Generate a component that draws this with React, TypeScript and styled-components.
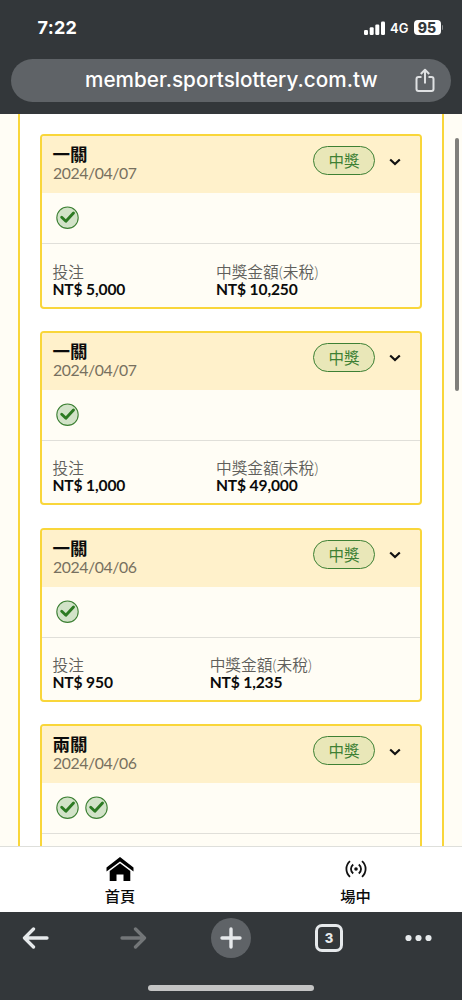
import React from "react";
import styled, { createGlobalStyle } from "styled-components";

const GlobalStyle = createGlobalStyle`
  *, *::before, *::after { box-sizing: border-box; }
  body { margin: 0; background: #33373a; }
  svg { display: block; flex: none; }
`;

const Screen = styled.div`
  width: 462px;
  height: 1000px;
  display: flex;
  flex-direction: column;
  overflow: hidden;
  background: #33373a;
  color: #0b0b0b;
  font-family: Lato, "Noto Sans CJK TC", sans-serif;
`;

const BrowserHeader = styled.header`
  flex: none;
  height: 114px;
  padding: 0 11px;
  color: #fff;
  font-family: Inter, "Liberation Sans", sans-serif;
`;

const StatusBar = styled.div`
  height: 58.5px;
  padding: 17px 8px 0 26.5px;
  display: flex;
  justify-content: space-between;
`;

const Clock = styled.div`
  font-size: 18px;
  line-height: 22px;
  font-weight: 700;
  letter-spacing: 0.3px;
`;

const StatusIcons = styled.div`
  height: 21px;
  display: flex;
  align-items: center;
`;

const Network = styled.span`
  margin: 1px 5px 0 5px;
  font-size: 13px;
  font-weight: 600;
  letter-spacing: 0.1px;
`;

const Battery = styled.span`
  width: 27px;
  height: 15px;
  border-radius: 4px;
  background: #fff;
  color: #33373a;
  font-size: 14px;
  line-height: 15px;
  font-weight: 800;
  text-align: center;
`;

const BatteryTip = styled.span`
  width: 1.5px;
  height: 5px;
  margin-left: 1px;
  border-radius: 0 2px 2px 0;
  background: #85888a;
`;

const AddressBar = styled.div`
  height: 43px;
  padding: 0 15px 0 74px;
  border-radius: 22px;
  background: #5f6367;
  display: flex;
  align-items: center;
  justify-content: space-between;
`;

const Address = styled.span`
  font-size: 20.7px;
  line-height: 24px;
  font-weight: 500;
  letter-spacing: 0.02px;
  white-space: nowrap;
`;

const Page = styled.main`
  position: relative;
  height: 732px;
  flex: none;
  overflow: hidden;
  background: #fffdf5;
  padding: 0 18px;
`;

const Panel = styled.section`
  height: 820px;
  padding: 20px 20px 0;
  border: solid #f9d63a;
  border-width: 0 2px;
  background: #fff;
  display: flex;
  flex-direction: column;
  gap: 22.3px;
`;

const ScrollThumb = styled.div`
  position: absolute;
  top: 24px;
  right: 3px;
  width: 4px;
  height: 253px;
  border-radius: 2px;
  background: #807f7b;
`;

const Card = styled.article`
  flex: none;
  height: 174.5px;
  border: 2px solid #f9d63a;
  border-radius: 4px;
  background: #fffdf5;
  overflow: hidden;
`;

const CardHeader = styled.header`
  height: 57px;
  padding: 9px 19px 0 11px;
  background: #fff1cb;
  display: flex;
  align-items: flex-start;
`;

const Heading = styled.div`
  flex: 1;
`;

const Title = styled.h2`
  margin: 0 0 0 -0.5px;
  font-size: 17.5px;
  line-height: 19px;
  font-weight: 700;
`;

const PlayedOn = styled.div`
  margin-top: -1px;
  font-size: 15.8px;
  line-height: 19px;
  letter-spacing: -0.42px;
  color: #77705f;
`;

const WinBadge = styled.span`
  width: 62px;
  height: 29px;
  margin: 1px 14px 0 0;
  border: 1px solid #3d8034;
  border-radius: 15px;
  background: #e9e7b8;
  color: #3d8034;
  font-size: 15.5px;
  line-height: 28px;
  text-align: center;
`;

const Legs = styled.div`
  height: 51px;
  padding: 13px 13.5px 0;
  border-bottom: 1px solid #e0dfd9;
  display: flex;
  gap: 6.5px;
`;

const Amounts = styled.div`
  padding: 19.5px 10.5px 0;
  display: flex;
`;

const Amount = styled.div<{ $width?: number }>`
  width: ${({ $width }) => ($width ? `${$width}px` : "auto")};
  white-space: nowrap;
`;

const Label = styled.div`
  font-size: 15.7px;
  line-height: 17px;
  font-weight: 350;
  color: #605f5b;
`;

const Money = styled.div`
  margin-top: -1px;
  font-size: 15.6px;
  line-height: 18px;
  font-weight: 700;
  letter-spacing: -0.15px;
`;

const SiteNav = styled.nav`
  flex: none;
  height: 66px;
  border-top: 1px solid #dedfdb;
  background: #fff;
  display: grid;
  grid-template-columns: 240px 231px;
`;

const NavItem = styled.div`
  padding-top: 7px;
  display: flex;
  flex-direction: column;
  align-items: center;
  font-size: 15.3px;
  line-height: 20px;
  font-weight: 500;
`;

const NavIcon = styled.div`
  height: 30px;
  display: flex;
  align-items: center;
`;

const NavLabel = styled.span`
  margin-top: 2px;
`;

const BrowserToolbar = styled.footer`
  height: 88px;
  padding-top: 5px;
`;

const ToolRow = styled.div`
  height: 41px;
  display: grid;
  grid-template-columns: 70px 126px 70px 126px 53px;
  align-items: center;
  justify-items: center;
`;

const NewTab = styled.div`
  width: 40px;
  height: 40px;
  border-radius: 50%;
  background: #5f6367;
  display: grid;
  place-items: center;
`;

const TabCount = styled.div`
  width: 28px;
  height: 28px;
  border: 3px solid #e6e9eb;
  border-radius: 7px;
  color: #e6e9eb;
  font: 800 13px/22px Inter, sans-serif;
  text-align: center;
`;

const HomeIndicator = styled.div`
  width: 166px;
  height: 6px;
  margin: 27px auto 0;
  border-radius: 3px;
  background: #c4c4c4;
`;

const Signal = () => (
  <svg width="21" height="14" viewBox="0 0 21 14" fill="#fff">
    <rect x="0" y="9" width="4" height="5" rx="1.2" />
    <rect x="5.7" y="6.3" width="4" height="7.7" rx="1.2" />
    <rect x="11.3" y="3.5" width="4" height="10.5" rx="1.2" />
    <rect x="17" y="0.5" width="4" height="13.5" rx="1.2" />
  </svg>
);

const ShareIcon = () => (
  <svg width="22" height="26" viewBox="0 0 22 26" fill="none" stroke="#dfe1e3" strokeWidth="2" strokeLinejoin="round">
    <path d="M7.5 10H4.500a2 2 0 0 0-2 2V22a2 2 0 0 0 2 2h13a2 2 0 0 0 2-2V12a2 2 0 0 0-2-2h-3" />
    <path d="M11 16.500V3M6.800 7L11 2.800 15.200 7" />
  </svg>
);

const LegWon = () => (
  <svg width="23" height="23" viewBox="0 0 23 23" fill="none">
    <circle cx="11.5" cy="11.700" r="10.7" fill="#d2e3c8" stroke="#3d8034" strokeWidth="1.1" />
    <path d="M5.700 11.200l4.200 4L17.500 7" stroke="#2c7a22" strokeWidth="2.900" strokeLinejoin="round" strokeLinecap="round" />
  </svg>
);

const Chevron = () => (
  <svg width="12" height="8" viewBox="0 0 12 8" fill="none">
    <path d="M1.2 1.5L6 6l4.8-4.5" stroke="#111" strokeWidth="2.2" />
  </svg>
);

const ChevronSlot = styled.div`
  height: 29px;
  margin-top: 2px;
  display: flex;
  align-items: center;
`;

const HomeIcon = () => (
  <svg width="28" height="25" viewBox="0 0 28 25" fill="#000">
    <path d="M14 0l13.5 10.500v4L14 4.500.5 14.500v-4z" />
    <path d="M14 6.300l10.300 7.700V24h-6.800v-6.500h-7V24H3.700V14z" />
  </svg>
);

const LiveIcon = () => (
  <svg width="22" height="18" viewBox="0 0 22 18" fill="none" stroke="#111" strokeWidth="1.8">
    <path d="M5 1.200C0.200 5.500 0.200 12.500 5 16.800M17 1.200c4.800 4.300 4.800 11.300 0 15.600M8.200 4.500c-3 2.600-3 6.400 0 9M13.800 4.500c3 2.600 3 6.400 0 9" />
    <circle cx="11" cy="9" r="1.8" fill="#111" stroke="none" />
  </svg>
);

const Arrow = ({ forward = false }: { forward?: boolean }) => (
  <svg width="27" height="22" viewBox="0 0 27 22" fill="none" stroke={forward ? "#737678" : "#e6e9eb"} strokeWidth="3.3" strokeLinecap="round" strokeLinejoin="round">
    <path d={forward ? "M2 11h22.500M15.500 2l9 9-9 9" : "M25 11H2.500M11.500 2l-9 9 9 9"} />
  </svg>
);

const Plus = () => (
  <svg width="22" height="22" viewBox="0 0 22 22" stroke="#e6e9eb" strokeWidth="3.4" strokeLinecap="round">
    <path d="M11 2v18M2 11h18" />
  </svg>
);

const MoreDots = () => (
  <svg width="27" height="8" viewBox="0 0 27 8" fill="#e6e9eb">
    <circle cx="3.5" cy="4" r="3.1" />
    <circle cx="13.5" cy="4" r="3.1" />
    <circle cx="23.5" cy="4" r="3.1" />
  </svg>
);

interface Bet {
  title: string;
  date: string;
  legs: number;
  stake: string;
  prize: string;
  stakeWidth: number;
}

const bets: Bet[] = [
  { title: "一關", date: "2024/04/07", legs: 1, stake: "5,000", prize: "10,250", stakeWidth: 163.5 },
  { title: "一關", date: "2024/04/07", legs: 1, stake: "1,000", prize: "49,000", stakeWidth: 163.5 },
  { title: "一關", date: "2024/04/06", legs: 1, stake: "950", prize: "1,235", stakeWidth: 157.2 },
  { title: "兩關", date: "2024/04/06", legs: 2, stake: "", prize: "", stakeWidth: 157.2 },
];

const BetCard = ({ bet }: { bet: Bet }) => (
  <Card>
    <CardHeader>
      <Heading>
        <Title>{bet.title}</Title>
        <PlayedOn>{bet.date}</PlayedOn>
      </Heading>
      <WinBadge>中獎</WinBadge>
      <ChevronSlot><Chevron /></ChevronSlot>
    </CardHeader>
    <Legs>
      {Array.from({ length: bet.legs }, (_, i) => <LegWon key={i} />)}
    </Legs>
    {bet.stake && (
      <Amounts>
        <Amount $width={bet.stakeWidth}>
          <Label>投注</Label>
          <Money>NT$ {bet.stake}</Money>
        </Amount>
        <Amount>
          <Label>中獎金額(未稅)</Label>
          <Money>NT$ {bet.prize}</Money>
        </Amount>
      </Amounts>
    )}
  </Card>
);

export default function App() {
  return (
    <Screen>
      <GlobalStyle />
      <BrowserHeader>
        <StatusBar>
          <Clock>7:22</Clock>
          <StatusIcons>
            <Signal />
            <Network>4G</Network>
            <Battery>95</Battery>
            <BatteryTip />
          </StatusIcons>
        </StatusBar>
        <AddressBar>
          <Address>member.sportslottery.com.tw</Address>
          <ShareIcon />
        </AddressBar>
      </BrowserHeader>
      <Page>
        <Panel>
          {bets.map((bet, i) => <BetCard key={i} bet={bet} />)}
        </Panel>
        <ScrollThumb />
      </Page>
      <SiteNav>
        <NavItem>
          <NavIcon><HomeIcon /></NavIcon>
          <NavLabel>首頁</NavLabel>
        </NavItem>
        <NavItem>
          <NavIcon><LiveIcon /></NavIcon>
          <NavLabel>場中</NavLabel>
        </NavItem>
      </SiteNav>
      <BrowserToolbar>
        <ToolRow>
          <Arrow />
          <Arrow forward />
          <NewTab><Plus /></NewTab>
          <TabCount>3</TabCount>
          <MoreDots />
        </ToolRow>
        <HomeIndicator />
      </BrowserToolbar>
    </Screen>
  );
}
